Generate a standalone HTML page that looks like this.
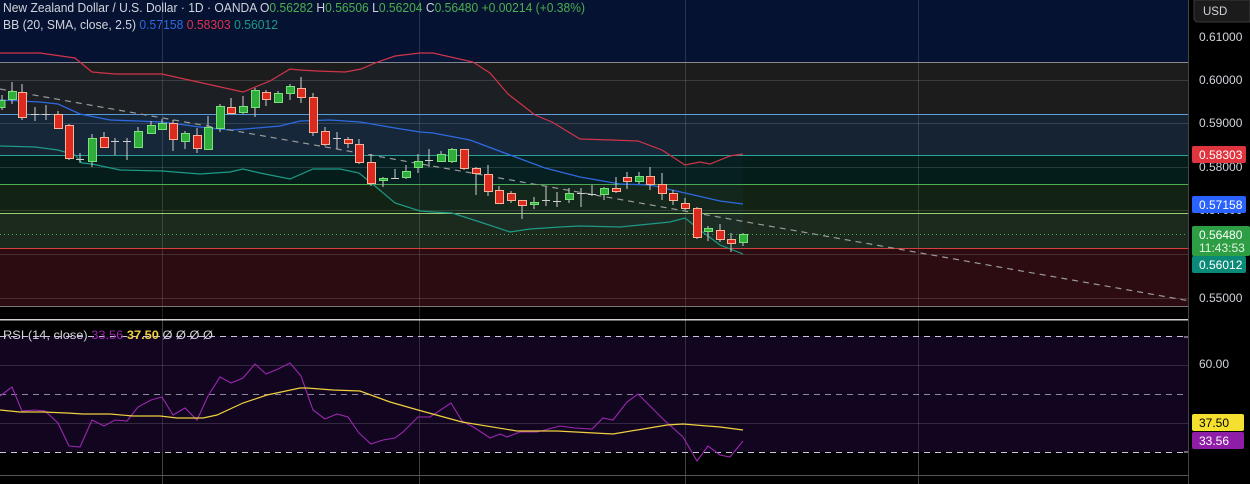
<!DOCTYPE html>
<html><head><meta charset="utf-8"><style>
html,body{margin:0;padding:0;background:#000;width:1250px;height:484px;overflow:hidden;font-family:"Liberation Sans",sans-serif}
svg{display:block}
</style></head><body>
<svg width="1250" height="484" xmlns="http://www.w3.org/2000/svg" font-family="Liberation Sans, sans-serif">
<rect width="1250" height="484" fill="#000"/>
<rect x="0" y="0" width="1188" height="62" fill="#061232"/>
<rect x="0" y="62" width="1188" height="52" fill="#1c1c1d"/>
<rect x="0" y="114" width="1188" height="41" fill="#152333"/>
<rect x="0" y="155" width="1188" height="29" fill="#041c1a"/>
<rect x="0" y="184" width="1188" height="29" fill="#132313"/>
<rect x="0" y="213" width="1188" height="35" fill="#1b2a1c"/>
<rect x="0" y="248" width="1188" height="58" fill="#2c0c10"/>
<g stroke="#ffffff" stroke-opacity="0.14" stroke-width="1">
<line x1="0" y1="80.5" x2="1188" y2="80.5"/><line x1="0" y1="123.5" x2="1188" y2="123.5"/>
<line x1="0" y1="167.5" x2="1188" y2="167.5"/><line x1="0" y1="210.5" x2="1188" y2="210.5"/>
<line x1="0" y1="254.5" x2="1188" y2="254.5"/><line x1="0" y1="298.5" x2="1188" y2="298.5"/>
<line x1="162.5" y1="0" x2="162.5" y2="484"/><line x1="419.5" y1="0" x2="419.5" y2="484"/>
<line x1="685.5" y1="0" x2="685.5" y2="484"/><line x1="918.5" y1="0" x2="918.5" y2="484"/>
</g>
<line x1="0" y1="62.5" x2="1188" y2="62.5" stroke="#8a8a8a"/>
<line x1="0" y1="114.5" x2="1188" y2="114.5" stroke="#5fa0d8"/>
<line x1="0" y1="155.5" x2="1188" y2="155.5" stroke="#26a69a"/>
<line x1="0" y1="184.5" x2="1188" y2="184.5" stroke="#4caf50"/>
<line x1="0" y1="213.5" x2="1188" y2="213.5" stroke="#9ccc75"/>
<line x1="0" y1="248.5" x2="1188" y2="248.5" stroke="#d84040"/>
<line x1="0" y1="306.5" x2="1188" y2="306.5" stroke="#777"/>
<polygon fill="#2a5a8a" fill-opacity="0.08" points="0,53 40,53 75,58 92,72 115,74 162,74 207,84 243,92 270,81 290,69 300,70 317,71 345,72 361,69 375,63 395,56 420,53 433,53 473,62 490,73 508,94 535,115 552,122 580,139 612,140 638,141 662,150 685,165 700,162 710,164 730,156 743,154 743,254 720,245 700,230 685,218 670,222 620,227 580,226 560,227 530,229 510,232 480,222 452,213 433,212 420,211 395,203 375,186 359,173 340,169 313,169 290,179 260,173 243,169 230,172 200,174 162,171 120,170 92,164 82,163 75,155 58,150 35,147 0,146"/>
<polyline fill="none" stroke="#d2344a" stroke-width="1.2" points="0,53 40,53 75,58 92,72 115,74 162,74 207,84 243,92 270,81 290,69 300,70 317,71 345,72 361,69 375,63 395,56 420,53 433,53 473,62 490,73 508,94 535,115 552,122 580,139 612,140 638,141 662,150 685,165 700,162 710,164 730,156 743,154"/>
<polyline fill="none" stroke="#2d6ae0" stroke-width="1.3" points="0,100 40,102 58,104 80,114 110,120 162,122 185,125 200,127 230,130 245,129 280,126 300,121 330,120 360,122 395,128 420,132 433,133 470,140 510,155 545,168 580,177 620,184 650,185 685,193 720,201 743,204"/>
<polyline fill="none" stroke="#1e9a86" stroke-width="1.2" points="0,146 35,147 58,150 75,155 82,163 92,164 120,170 162,171 200,174 230,172 243,169 260,173 290,179 313,169 340,169 359,173 375,186 395,203 420,211 433,212 452,213 480,222 510,232 530,229 560,227 580,226 620,227 670,222 685,218 700,230 720,245 743,254"/>
<line x1="0" y1="89" x2="1190" y2="301" stroke="#9a9a9a" stroke-width="1.2" stroke-dasharray="6,5"/>
<line x1="0" y1="234.5" x2="1188" y2="234.5" stroke="#4caf50" stroke-dasharray="1,3"/>
<g stroke-width="1">
<g stroke="#cfcfcf">
<line x1="2" y1="95" x2="2" y2="110"/><line x1="12" y1="82" x2="12" y2="104"/><line x1="22" y1="84" x2="22" y2="120"/>
<line x1="35" y1="107" x2="35" y2="121"/><line x1="46" y1="105" x2="46" y2="120"/><line x1="58" y1="111" x2="58" y2="128"/>
<line x1="69" y1="124" x2="69" y2="160"/><line x1="80" y1="153" x2="80" y2="163"/><line x1="92" y1="134" x2="92" y2="167"/>
<line x1="104" y1="132" x2="104" y2="148"/><line x1="115" y1="138" x2="115" y2="155"/><line x1="127" y1="138" x2="127" y2="160"/>
<line x1="138" y1="127" x2="138" y2="147"/><line x1="151" y1="121" x2="151" y2="134"/><line x1="162" y1="119" x2="162" y2="130"/>
<line x1="173" y1="120" x2="173" y2="151"/><line x1="185" y1="131" x2="185" y2="149"/><line x1="197" y1="128" x2="197" y2="153"/>
<line x1="208" y1="116" x2="208" y2="149"/><line x1="220" y1="104" x2="220" y2="132"/><line x1="231" y1="98" x2="231" y2="113"/>
<line x1="243" y1="96" x2="243" y2="114"/><line x1="255" y1="88" x2="255" y2="117"/><line x1="266" y1="90" x2="266" y2="106"/>
<line x1="278" y1="91" x2="278" y2="103"/><line x1="290" y1="84" x2="290" y2="100"/><line x1="301" y1="77" x2="301" y2="103"/>
<line x1="313" y1="93" x2="313" y2="136"/><line x1="325" y1="127" x2="325" y2="146"/><line x1="337" y1="132" x2="337" y2="149"/>
<line x1="348" y1="137" x2="348" y2="148"/><line x1="359" y1="139" x2="359" y2="164"/><line x1="371" y1="154" x2="371" y2="186"/>
<line x1="383" y1="177" x2="383" y2="187"/><line x1="395" y1="169" x2="395" y2="179"/><line x1="406" y1="165" x2="406" y2="179"/>
<line x1="418" y1="154" x2="418" y2="173"/><line x1="429" y1="149" x2="429" y2="167"/><line x1="441" y1="151" x2="441" y2="162"/>
<line x1="452" y1="148" x2="452" y2="163"/><line x1="464" y1="149" x2="464" y2="170"/><line x1="476" y1="167" x2="476" y2="195"/>
<line x1="488" y1="165" x2="488" y2="196"/><line x1="499" y1="186" x2="499" y2="204"/><line x1="511" y1="191" x2="511" y2="203"/>
<line x1="522" y1="200" x2="522" y2="219"/><line x1="534" y1="197" x2="534" y2="209"/><line x1="546" y1="187" x2="546" y2="206"/>
<line x1="557" y1="192" x2="557" y2="207"/><line x1="569" y1="188" x2="569" y2="203"/><line x1="581" y1="188" x2="581" y2="207"/>
<line x1="592" y1="185" x2="592" y2="196"/><line x1="604" y1="187" x2="604" y2="200"/><line x1="616" y1="177" x2="616" y2="193"/>
<line x1="627" y1="172" x2="627" y2="189"/><line x1="639" y1="172" x2="639" y2="184"/><line x1="650" y1="167" x2="650" y2="190"/>
<line x1="662" y1="173" x2="662" y2="200"/><line x1="673" y1="190" x2="673" y2="205"/><line x1="685" y1="198" x2="685" y2="210"/>
<line x1="697" y1="207" x2="697" y2="239"/><line x1="708" y1="226" x2="708" y2="241"/><line x1="720" y1="224" x2="720" y2="242"/>
<line x1="731" y1="233" x2="731" y2="252"/><line x1="743" y1="233" x2="743" y2="246"/>
</g>
<g fill="#2fae3b" stroke="#7be07b">
<rect x="-2" y="100.5" width="7" height="7"/><rect x="8.5" y="91.5" width="8" height="8"/>
<rect x="88.5" y="138.5" width="8" height="23"/><rect x="134.5" y="131.5" width="8" height="16"/>
<rect x="147.5" y="125.5" width="8" height="8"/><rect x="158.5" y="123.5" width="8" height="6"/>
<rect x="181.5" y="133.5" width="8" height="8"/><rect x="204.5" y="127.5" width="8" height="22"/>
<rect x="216.5" y="106.5" width="8" height="22"/><rect x="239.5" y="106.5" width="8" height="6"/>
<rect x="251.5" y="90.5" width="8" height="17"/><rect x="274.5" y="93.5" width="8" height="9"/>
<rect x="286.5" y="86.5" width="8" height="7"/><rect x="379.5" y="178.5" width="8" height="2"/>
<rect x="402.5" y="171.5" width="8" height="6"/><rect x="414.5" y="161.5" width="8" height="6"/>
<rect x="437.5" y="154.5" width="8" height="7"/><rect x="448.5" y="149.5" width="8" height="12"/>
<rect x="530.5" y="202.5" width="8" height="2"/><rect x="565.5" y="193.5" width="8" height="6"/>
<rect x="600.5" y="188.5" width="8" height="6"/><rect x="635.5" y="176.5" width="8" height="5"/>
<rect x="704.5" y="228.5" width="8" height="3"/><rect x="739.5" y="234.5" width="8" height="8"/>
</g>
<g fill="#dd2a1f" stroke="#f6b49a">
<rect x="18.5" y="92.5" width="8" height="25"/><rect x="54.5" y="114.5" width="8" height="14"/>
<rect x="65.5" y="125.5" width="8" height="33"/><rect x="100.5" y="137.5" width="8" height="10"/>
<rect x="169.5" y="123.5" width="8" height="16"/><rect x="193.5" y="135.5" width="8" height="13"/>
<rect x="227.5" y="107.5" width="8" height="6"/><rect x="262.5" y="92.5" width="8" height="7"/>
<rect x="297.5" y="88.5" width="8" height="9"/><rect x="309.5" y="97.5" width="8" height="35"/>
<rect x="321.5" y="131.5" width="8" height="13"/><rect x="344.5" y="139.5" width="8" height="4"/>
<rect x="355.5" y="144.5" width="8" height="18"/><rect x="367.5" y="162.5" width="8" height="21"/>
<rect x="460.5" y="149.5" width="8" height="19"/><rect x="472.5" y="168.5" width="8" height="5"/>
<rect x="484.5" y="174.5" width="8" height="17"/><rect x="495.5" y="190.5" width="8" height="13"/>
<rect x="507.5" y="193.5" width="8" height="7"/><rect x="518.5" y="200.5" width="8" height="5"/>
<rect x="612.5" y="188.5" width="8" height="3"/><rect x="623.5" y="177.5" width="8" height="4"/>
<rect x="646.5" y="176.5" width="8" height="8"/><rect x="658.5" y="184.5" width="8" height="9"/>
<rect x="669.5" y="193.5" width="8" height="7"/><rect x="681.5" y="203.5" width="8" height="5"/>
<rect x="693.5" y="208.5" width="8" height="29"/><rect x="716.5" y="230.5" width="8" height="9"/>
<rect x="727.5" y="239.5" width="8" height="4"/>
</g>
<g stroke="#cfcfcf">
<line x1="31" y1="114.5" x2="39" y2="114.5"/><line x1="42" y1="114.5" x2="50" y2="114.5"/><line x1="76" y1="159.5" x2="84" y2="159.5"/>
<line x1="111" y1="141.5" x2="119" y2="141.5"/><line x1="123" y1="141.5" x2="131" y2="141.5"/><line x1="333" y1="138.5" x2="341" y2="138.5"/>
<line x1="391" y1="178.5" x2="399" y2="178.5"/><line x1="425" y1="160.5" x2="433" y2="160.5"/><line x1="542" y1="200.5" x2="550" y2="200.5"/>
<line x1="553" y1="201.5" x2="561" y2="201.5"/><line x1="577" y1="193.5" x2="585" y2="193.5"/><line x1="588" y1="194.5" x2="596" y2="194.5"/>
</g>
</g>
<text x="3" y="12" font-size="12.5" fill="#d1d4dc" textLength="582" lengthAdjust="spacingAndGlyphs">New Zealand Dollar / U.S. Dollar · 1D · OANDA  O<tspan fill="#4caf50">0.56282</tspan> H<tspan fill="#4caf50">0.56506</tspan> L<tspan fill="#4caf50">0.56204</tspan> C<tspan fill="#4caf50">0.56480 +0.00214 (+0.38%)</tspan></text>
<text x="3" y="29" font-size="12.5" fill="#d1d4dc" textLength="275" lengthAdjust="spacingAndGlyphs">BB (20, SMA, close, 2.5)  <tspan fill="#2d6ae0">0.57158</tspan>  <tspan fill="#e0344a">0.58303</tspan>  <tspan fill="#1e9a86">0.56012</tspan></text>
<rect x="0" y="319" width="1250" height="1.5" fill="#cfcfcf"/>
<rect x="0" y="336" width="1188" height="116" fill="#120520"/>
<g stroke="#ffffff" stroke-opacity="0.14"><line x1="0" y1="365.5" x2="1188" y2="365.5"/><line x1="0" y1="423.5" x2="1188" y2="423.5"/></g>
<g stroke="#c8c8d8" stroke-dasharray="6,5"><line x1="0" y1="336.5" x2="1188" y2="336.5"/><line x1="0" y1="452.5" x2="1188" y2="452.5"/></g>
<line x1="0" y1="394.5" x2="1188" y2="394.5" stroke="#8a8a9a" stroke-dasharray="6,5"/>
<g stroke="#ffffff" stroke-opacity="0.14"><line x1="162.5" y1="320" x2="162.5" y2="484"/><line x1="419.5" y1="320" x2="419.5" y2="484"/><line x1="685.5" y1="320" x2="685.5" y2="484"/><line x1="918.5" y1="320" x2="918.5" y2="484"/></g>
<polyline fill="none" stroke="#9c27b0" stroke-width="1.1" points="0,396 12,387 22,411 35,410 45,411 58,423 69,446 80,447 92,420 104,426 115,420 127,421 138,407 151,400 162,397 173,415 185,408 197,420 208,396 220,377 231,383 243,378 255,364 266,374 278,369 290,363 301,376 313,410 325,419 337,414 348,417 359,433 371,444 383,440 395,438 403,432 418,417 430,417 451,403 462,421 475,428 490,438 500,434 507,437 520,432 537,432 560,426 575,428 592,429 603,418 613,420 627,402 638,394 653,409 663,419 683,437 697,461 708,446 720,455 730,457 743,441"/>
<polyline fill="none" stroke="#f0d040" stroke-width="1.2" points="0,410 20,412 43,412 67,413 83,414 110,414 133,416 160,416 177,418 203,418 217,415 243,403 267,395 300,388 307,388 333,390 360,391 390,402 418,410 462,422 517,431 557,431 613,434 667,425 683,424 720,427 743,430"/>
<text x="3" y="339" font-size="12" fill="#d1d4dc" textLength="210" lengthAdjust="spacingAndGlyphs">RSI (14, close)  <tspan fill="#9c27b0">33.56</tspan>  <tspan fill="#f0d040" font-weight="bold">37.50</tspan>   Ø   Ø   Ø   Ø</text>
<rect x="0" y="475" width="1250" height="1" fill="#555"/>
<rect x="1188" y="0" width="62" height="484" fill="#000"/>
<line x1="1188.5" y1="0" x2="1188.5" y2="484" stroke="#444"/>
<path d="M1194,0 V17 Q1194,22 1199,22 H1250 V0 Z" fill="#1b1b1b" stroke="#3a3a3a"/>
<text x="1203" y="15" font-size="11.5" fill="#d1d4dc">USD</text>
<g font-size="12" fill="#d1d4dc">
<text x="1199" y="41">0.61000</text><text x="1199" y="84">0.60000</text><text x="1199" y="127">0.59000</text>
<text x="1199" y="171">0.58000</text><text x="1199" y="214">0.57000</text><text x="1199" y="302">0.55000</text>
<text x="1199" y="368">60.00</text>
</g>
<rect x="1192" y="146" width="54" height="17" rx="2" fill="#e0343e"/><text x="1199" y="159" font-size="12" fill="#fff">0.58303</text>
<rect x="1192" y="196" width="54" height="17" rx="2" fill="#2962ff"/><text x="1199" y="209" font-size="12" fill="#fff">0.57158</text>
<rect x="1192" y="226" width="58" height="30" rx="2" fill="#2e9e44"/><text x="1199" y="239" font-size="12" fill="#fff">0.56480</text><text x="1199" y="252" font-size="12" fill="#e0f5e0">11:43:53</text>
<rect x="1192" y="256" width="54" height="17" rx="2" fill="#0c8a78"/><text x="1199" y="269" font-size="12" fill="#fff">0.56012</text>
<rect x="1192" y="414" width="52" height="17" rx="2" fill="#f5e030"/><text x="1199" y="427" font-size="12" fill="#000">37.50</text>
<rect x="1192" y="432" width="52" height="17" rx="2" fill="#8e1ea8"/><text x="1199" y="445" font-size="12" fill="#fff">33.56</text>
<g stroke="#ccc"><line x1="1184" y1="337" x2="1188" y2="337"/><line x1="1184" y1="452" x2="1188" y2="452"/></g>
</svg>
</body></html>
